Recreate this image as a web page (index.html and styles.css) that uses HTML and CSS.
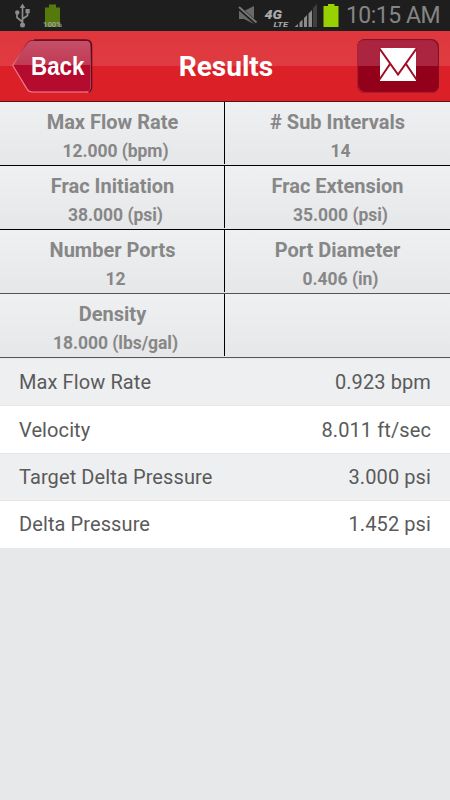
FILE: index.html
```
<!DOCTYPE html>
<html lang="en">
<head>
<meta charset="utf-8">
<title>Results</title>
<link rel="stylesheet" href="styles.css">
</head>
<body>
<div class="status">
  <svg class="status-icons" width="340" height="31" viewBox="0 0 340 31">
    <g fill="none" stroke="#8c8c8c" stroke-width="1.700">
      <path d="M22.500 7v17M22.500 22l-5.500-4.500v-4M22.500 19l5-3.500v-4"/>
    </g>
    <g fill="#8c8c8c">
      <path d="M22.500 3.500l2.800 4.500h-5.600zM25.500 9h4.200v4.200h-4.200z"/>
      <circle cx="17.300" cy="12.500" r="2.200"/><circle cx="22.500" cy="25" r="2.500"/>
    </g>
    <path fill="#557a0b" d="M49 4.500h7v3h4v19.500H45V7.500h4z"/>
    <text x="43" y="26.500" class="battery-label" textLength="19" lengthAdjust="spacingAndGlyphs">100%</text>
    <path fill="#696969" d="M239 11h5l10-5v18l-10-5h-5z"/>
    <path d="M238 7l18 16" stroke="#1e1e1e" stroke-width="4"/>
    <path d="M239 7l17.500 15.500" stroke="#777" stroke-width="2"/>
    <text x="264.500" y="19" class="net-4g" textLength="17.500" lengthAdjust="spacingAndGlyphs">4G</text>
    <text x="273.500" y="26.700" class="net-lte" textLength="14.500" lengthAdjust="spacingAndGlyphs">LTE</text>
    <path fill="#404040" d="M313 8l4-4v23h-4z"/>
    <path fill="#8b8b8b" d="M295 26.500l3-2.500v3h-3zM299.500 22.500l3-3v7.500h-3zM304 18l3-3v12h-3zM308.500 13.500l3.500-3.500v17h-3.500z"/>
    <path fill="#99d000" d="M328 4h6.500v2h4v21h-15V6h4.500z"/>
  </svg>
  <span class="clock">10:15 AM</span>
</div>
<header class="header">
  <svg class="back" width="84" height="58" viewBox="0 0 84 58" role="button" aria-label="Back">
    <defs>
      <linearGradient id="backFill" x2="0" y2="1">
        <stop offset="0" stop-color="#c55069"/><stop offset=".48" stop-color="#c33953"/>
        <stop offset=".48" stop-color="#b30b2d"/><stop offset="1" stop-color="#b50b2f"/>
      </linearGradient>
      <linearGradient id="backEdge" x2="0" y2="1">
        <stop offset="0" stop-color="#8f1d31"/><stop offset=".5" stop-color="#ed7784"/><stop offset="1" stop-color="#f08b98"/>
      </linearGradient>
    </defs>
    <path d="M20 3.500h55q4 0 4 5V50q0 5-4 5H20q-3 0-5-3L.8 28.500 14 7.500q3-4 6-4z" fill="url(#backFill)" stroke="url(#backEdge)" stroke-width="1.200"/>
    <path d="M22 3h52q5.500 0 5.500 6v41q0 4-3 5" fill="none" stroke="#650d20" stroke-width="1.600"/>
    <text x="19" y="38" class="back-label" textLength="53.500" lengthAdjust="spacingAndGlyphs">Back</text>
  </svg>
  <h1 class="title">Results</h1>
  <div class="mail">
    <svg width="38" height="36" viewBox="0 0 38 36">
      <path fill="#fff" d="M1 1h36v33H1z"/>
      <path d="M.5 1.500L19 27.500 37.500 1.500M.5 32.500L11 17M37.500 32.500L27 17" fill="none" stroke="#a40b25" stroke-width="2"/>
    </svg>
  </div>
</header>
<section class="inputs">
  <div class="cell"><b class="name">Max Flow Rate</b><b class="value">12.000 (bpm)</b></div>
  <div class="cell"><b class="name"># Sub Intervals</b><b class="value">14</b></div>
  <div class="cell"><b class="name">Frac Initiation</b><b class="value">38.000 (psi)</b></div>
  <div class="cell"><b class="name">Frac Extension</b><b class="value">35.000 (psi)</b></div>
  <div class="cell"><b class="name">Number Ports</b><b class="value">12</b></div>
  <div class="cell"><b class="name">Port Diameter</b><b class="value">0.406 (in)</b></div>
  <div class="cell"><b class="name">Density</b><b class="value">18.000 (lbs/gal)</b></div>
  <div class="cell"></div>
</section>
<section class="results">
  <div class="row"><span>Max Flow Rate</span><span>0.923 bpm</span></div>
  <div class="row"><span>Velocity</span><span>8.011 ft/sec</span></div>
  <div class="row"><span>Target Delta Pressure</span><span>3.000 psi</span></div>
  <div class="row"><span>Delta Pressure</span><span>1.452 psi</span></div>
</section>
</body>
</html>
```
FILE: styles.css
```
* { box-sizing: border-box; }
body {
  margin: 0;
  height: 800px;
  overflow: hidden;
  background: #e7e8ea;
  font-family: Roboto, "Liberation Sans", sans-serif;
}
.status {
  display: flex;
  justify-content: space-between;
  height: 31px;
  background: #1e1e1e;
}
.status-icons { flex: none; }
.clock {
  padding-right: 10px;
  color: #858585;
  font-size: 23px;
  letter-spacing: -0.5px;
  line-height: 32px;
  white-space: nowrap;
}
.battery-label { font: 700 8px Roboto, sans-serif; fill: #a0a0a0; }
.net-4g { font: italic 900 12px Roboto, sans-serif; fill: #aaa; }
.net-lte { font: italic 700 8px Roboto, sans-serif; fill: #aaa; }
.header {
  display: grid;
  grid-template-columns: 102px 1fr 102px;
  align-items: center;
  height: 71px;
  background: linear-gradient(#e0363d, #e03b42 35px, #dc2027 35px);
  border-bottom: 1px solid #5d1014;
}
.back { margin: -1px 0 0 12px; }
.back-label { font: 700 26px "Liberation Sans", sans-serif; fill: #fff; }
.title {
  margin: 1px 0 0 2px;
  color: #fff;
  font-size: 28px;
  font-weight: 700;
  line-height: 34px;
  text-align: center;
}
.mail {
  display: flex;
  justify-content: center;
  align-items: center;
  width: 82px;
  height: 54px;
  margin-left: 9px;
  padding-bottom: 3px;
  border-radius: 8px;
  background: linear-gradient(#ac2540 0 27px, #92001a 27px);
  box-shadow: inset -1px 1px 1px #7c1325, inset 1px -1px 1px #b02032;
}
.inputs {
  display: grid;
  grid-template-columns: 225px 225px;
  grid-template-rows: repeat(4, 64px);
  padding-bottom: 1px;
}
.cell {
  display: flex;
  flex-direction: column;
  align-items: center;
  padding-top: 8px;
  border-bottom: 1px solid #000;
  background: linear-gradient(#eff0f2, #e6e7e9);
  color: #878787;
}
.cell:nth-child(odd) {
  background: linear-gradient(#000, #000) 224px 0 / 1px 62px no-repeat, linear-gradient(#eff0f2, #e6e7e9);
}
.cell:nth-child(n+5) { border-color: #555; }
.name { font-size: 20px; line-height: 24px; }
.value { margin-top: 6px; padding-left: 6px; font-size: 17.500px; line-height: 23px; letter-spacing: -0.05px; }
.row {
  display: flex;
  justify-content: space-between;
  align-items: center;
  height: 47.400px;
  padding: 0 19px;
  border-bottom: 1px solid #e5e6e8;
  background: #fff;
  color: #5a5a5a;
  font-size: 20px;
  letter-spacing: 0.1px;
}
.row:nth-child(odd) { background: #eeeff1; }
```
